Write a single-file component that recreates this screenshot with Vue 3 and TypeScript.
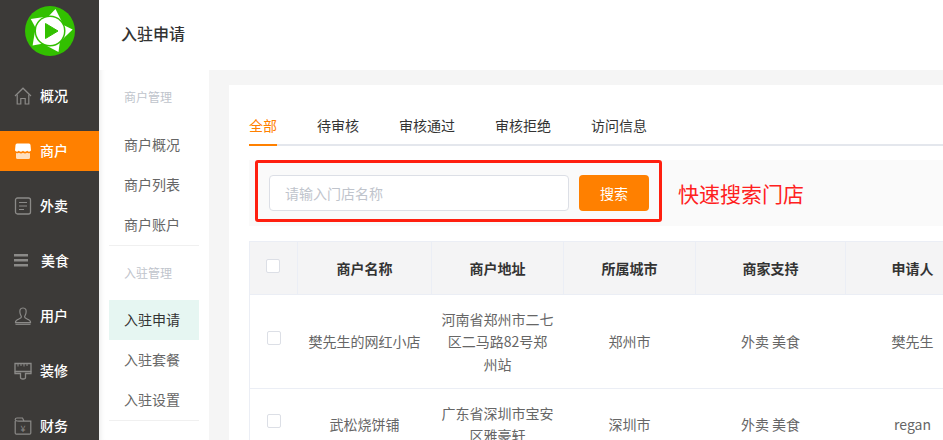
<script setup lang="ts">
import { ref } from "vue";

const menu = [
  { key: "home", label: "概况" },
  { key: "store", label: "商户" },
  { key: "doc", label: "外卖" },
  { key: "food", label: "美食" },
  { key: "user", label: "用户" },
  { key: "brush", label: "装修" },
  { key: "wallet", label: "财务" },
];
const activeMenu = ref("store");

const groups = [
  { title: "商户管理", items: ["商户概况", "商户列表", "商户账户"] },
  { title: "入驻管理", items: ["入驻申请", "入驻套餐", "入驻设置"] },
];
const activeSub = ref("入驻申请");

const tabs = ["全部", "待审核", "审核通过", "审核拒绝", "访问信息"];
const activeTab = ref("全部");

const columns = ["商户名称", "商户地址", "所属城市", "商家支持", "申请人"];
const rows = [
  {
    name: "樊先生的网红小店",
    address: "河南省郑州市二七区二马路82号郑州站",
    city: "郑州市",
    support: "外卖 美食",
    applicant: "樊先生",
  },
  {
    name: "武松烧饼铺",
    address: "广东省深圳市宝安区雅豪轩",
    city: "深圳市",
    support: "外卖 美食",
    applicant: "regan",
  },
];

const blades = [0, 72, 144, 216, 288];
</script>

<template>
  <div class="page">
    <aside class="sidebar">
      <div class="logo">
        <svg width="50" height="50" viewBox="0 0 50 50">
          <circle cx="25" cy="25" r="25" fill="#32c000" />
          <path
            v-for="angle in blades"
            :key="angle"
            fill="#fff"
            d="M30.5 3 L36.5 15 L20 14 Z"
            :transform="`rotate(${angle} 25 25)`"
          />
          <circle cx="25" cy="25" r="15.5" fill="#32c000" />
          <circle cx="25" cy="25" r="14" fill="#fff" />
          <path fill="#32c000" d="M20.5 17.5 L33 25 L20.5 32.5 Z" stroke="#32c000" stroke-width="1" stroke-linejoin="round" />
        </svg>
      </div>
      <nav class="menu">
        <a
          v-for="item in menu"
          :key="item.key"
          class="menu-item"
          :class="{ active: item.key === activeMenu }"
        >
          <svg class="menu-icon" width="18" height="18" viewBox="0 0 18 18">
            <g v-if="item.key === 'home'" fill="none" stroke="#8b8a88" stroke-width="1.2">
              <path d="M1 9 L9 1.2 L17 9" />
              <path d="M3.2 7.5 V17 H6.8 V11.5 H11.2 V17 H14.8 V7.5" />
            </g>
            <g v-else-if="item.key === 'store'" fill="#fff">
              <path d="M3 1.5 H15 Q16.3 1.5 16.5 3 L17 8.6 Q15.4 10.6 13.2 8.8 Q11 10.6 9 8.8 Q7 10.6 4.8 8.8 Q2.6 10.6 1 8.6 L1.5 3 Q1.7 1.5 3 1.5 Z" />
              <path opacity=".75" d="M2 11 Q4 11.6 5 10.8 Q7 12 9 10.8 Q11 12 13 10.8 Q14.4 11.6 16 11 V15.5 Q16 17 14.5 17 H3.5 Q2 17 2 15.5 Z" />
            </g>
            <g v-else-if="item.key === 'doc'" fill="none" stroke="#8b8a88">
              <rect x="1.5" y="1" width="15" height="16" rx="2" stroke-width="1.3" />
              <path d="M5 5.5 H13 M5 9 H13 M5 12.5 H10" stroke-width="1.2" />
            </g>
            <g v-else-if="item.key === 'food'" fill="#8b8a88">
              <rect x="0" y="2" width="14" height="2.5" />
              <rect x="0" y="7" width="14" height="2.5" />
              <rect x="0" y="12" width="14" height="2.5" />
            </g>
            <g v-else-if="item.key === 'user'" fill="none" stroke="#8b8a88" stroke-width="1.2">
              <path d="M9 1 C6 1 5.5 3.5 6 6 C6.3 8 7.4 9 7.4 10 C7.4 12 1.5 12 1.5 15 V15.6 H16.5 V15 C16.5 12 10.6 12 10.6 10 C10.6 9 11.7 8 12 6 C12.5 3.5 12 1 9 1 Z" />
              <path d="M1.5 17.3 H16.5" />
            </g>
            <g v-else-if="item.key === 'brush'" fill="none" stroke="#8b8a88" stroke-width="1.3">
              <path d="M1 1.5 H17 V9.5 H1 Z" />
              <path d="M4 1.5 V4.5 M7 1.5 V4 M10 1.5 V4.5 M13 1.5 V4" stroke-width="1" />
              <path d="M1 9.5 V11.5 H6.5 V15.5 Q6.5 17 9 17 Q11.5 17 11.5 15.5 V11.5 H17 V9.5" />
            </g>
            <g v-else fill="none" stroke="#8b8a88" stroke-width="1.2">
              <path d="M1.2 4 V16 Q1.2 17.2 2.4 17.2 H15.6 Q16.8 17.2 16.8 16 V4.2 H5 Q1.2 4.2 1.2 2.6 Q1.2 1 3 1 H8.5 L10 4" />
              <text x="9" y="14.5" text-anchor="middle" class="yen">¥</text>
            </g>
          </svg>
          <span class="menu-label" :class="{ shifted: item.key === 'food' }">{{ item.label }}</span>
        </a>
      </nav>
    </aside>

    <div class="main">
      <header class="topbar">入驻申请</header>
      <div class="body">
        <nav class="subnav">
          <section v-for="group in groups" :key="group.title" class="group">
            <h4 class="group-title">{{ group.title }}</h4>
            <a
              v-for="item in group.items"
              :key="item"
              class="sub-item"
              :class="{ active: item === activeSub }"
            >{{ item }}</a>
          </section>
        </nav>

        <div class="content">
          <div class="card">
            <div class="tabs">
              <a
                v-for="tab in tabs"
                :key="tab"
                class="tab"
                :class="{ active: tab === activeTab }"
              >{{ tab }}</a>
            </div>

            <div class="search">
              <input class="search-input" type="text" placeholder="请输入门店名称" />
              <button class="search-btn" type="button">搜索</button>
              <span class="hint">快速搜索门店</span>
              <div class="highlight"></div>
            </div>

            <table class="table">
              <colgroup>
                <col style="width: 48px" />
                <col style="width: 134px" />
                <col style="width: 132px" />
                <col style="width: 132px" />
                <col style="width: 150px" />
                <col style="width: 134px" />
              </colgroup>
              <thead>
                <tr>
                  <th><span class="check head"></span></th>
                  <th v-for="col in columns" :key="col">{{ col }}</th>
                </tr>
              </thead>
              <tbody>
                <tr v-for="row in rows" :key="row.name">
                  <td><span class="check"></span></td>
                  <td>{{ row.name }}</td>
                  <td>{{ row.address }}</td>
                  <td>{{ row.city }}</td>
                  <td>{{ row.support }}</td>
                  <td>{{ row.applicant }}</td>
                </tr>
              </tbody>
            </table>
          </div>
        </div>
      </div>
    </div>
  </div>
</template>

<style>
html,
body {
  margin: 0;
  overflow: hidden;
}
</style>

<style scoped>
.page {
  display: flex;
  width: 943px;
  height: 440px;
  overflow: hidden;
  font-family: "Noto Sans CJK SC", "Liberation Sans", sans-serif;
  font-size: 14px;
  color: #333;
  background: #f5f5f5;
}

.sidebar {
  flex: 0 0 99px;
  background: #3c3a38;
}

.logo {
  display: flex;
  justify-content: center;
  padding-top: 6px;
  height: 70px;
  box-sizing: border-box;
}

.menu {
  display: flex;
  flex-direction: column;
  gap: 15px;
  margin-top: 6px;
}

.menu-item {
  display: flex;
  align-items: center;
  flex: 0 0 40px;
  padding-left: 14px;
  color: #fff;
}

.menu-item.active {
  background: #ff8000;
}

.menu-icon {
  flex: none;
}

.menu-label {
  margin: -2px 0 0 8px;
  font-weight: 500;
}

.menu-label.shifted {
  margin-left: 9px;
}

.yen {
  font-size: 9px;
  fill: #8b8a88;
  stroke: none;
}

.main {
  flex: 1;
  min-width: 0;
  display: flex;
  flex-direction: column;
}

.topbar {
  flex: 0 0 70px;
  padding: 0 0 4px 22px;
  box-sizing: border-box;
  display: flex;
  align-items: center;
  background: #fff;
  font-size: 16px;
  font-weight: 500;
}

.body {
  flex: 1;
  display: flex;
  min-height: 0;
}

.subnav {
  flex: 0 0 90px;
  padding: 0 10px;
  background: #fff;
  box-shadow: inset 6px 0 6px -6px rgba(0, 0, 0, 0.12);
}

.group {
  border-bottom: 1px solid #f0f0f0;
}

.group-title {
  margin: 0;
  padding-left: 15px;
  height: 55px;
  line-height: 53px;
  font-size: 12px;
  font-weight: 400;
  color: #c0c4cc;
}

.group + .group .group-title {
  height: 54px;
  line-height: 54px;
}

.sub-item {
  display: block;
  height: 40px;
  line-height: 38px;
  padding-left: 15px;
  color: #666;
}

.sub-item.active {
  background: #e6f6f2;
  color: #333;
}

.content {
  flex: 1;
  min-width: 0;
  padding: 15px 0 0 20px;
}

.card {
  height: 100%;
  box-sizing: border-box;
  padding: 23px 0 0 20px;
  background: #fff;
  overflow: hidden;
}

.tabs {
  display: flex;
  gap: 40px;
  border-bottom: 2px solid #e4e7ed;
}

.tab {
  height: 36px;
  line-height: 34px;
  margin-bottom: -2px;
  border-bottom: 2px solid transparent;
  color: #333;
}

.tab.active {
  color: #ff8000;
  border-bottom-color: #ff8000;
}

.search {
  position: relative;
  display: flex;
  align-items: center;
  margin-top: 14px;
  padding: 15px 0 15px 20px;
  background: #fafafa;
}

.search-input {
  width: 300px;
  height: 36px;
  box-sizing: border-box;
  padding: 0 15px;
  border: 1px solid #dcdfe6;
  border-radius: 4px;
  background: #fff;
  outline: none;
  font: inherit;
}

.search-input::placeholder {
  color: #c0c4cc;
}

.search-btn {
  width: 70px;
  height: 36px;
  margin-left: 10px;
  border: 0;
  border-radius: 4px;
  background: #ff8000;
  color: #fff;
  font: inherit;
}

.hint {
  margin-left: 29px;
  font-size: 21px;
  color: #ff2020;
  white-space: nowrap;
}

.highlight {
  position: absolute;
  left: 6px;
  top: 0;
  width: 407px;
  height: 62px;
  box-sizing: border-box;
  border: 3px solid #ff1f0f;
  border-radius: 3px;
}

.table {
  table-layout: fixed;
  width: 730px;
  margin-top: 15px;
  border-collapse: collapse;
  border-top: 1px solid #ebeef5;
  border-left: 1px solid #ebeef5;
}

th {
  height: 52px;
  padding: 0 10px;
  background: #f4f4f5;
  border-right: 1px solid #ebeef5;
  border-bottom: 1px solid #ebeef5;
  font-weight: 700;
  color: #333;
}

td {
  padding: 12.5px 10px 13px;
  line-height: 22.5px;
  text-align: center;
  color: #666;
  border-bottom: 1px solid #ebeef5;
}

.check {
  display: block;
  box-sizing: border-box;
  width: 14px;
  height: 14px;
  margin: -6px 0 0 7px;
  border: 1px solid #dcdfe6;
  border-radius: 2px;
  background: #fff;
}

.check.head {
  margin-left: 6px;
  margin-top: -4px;
}
</style>
